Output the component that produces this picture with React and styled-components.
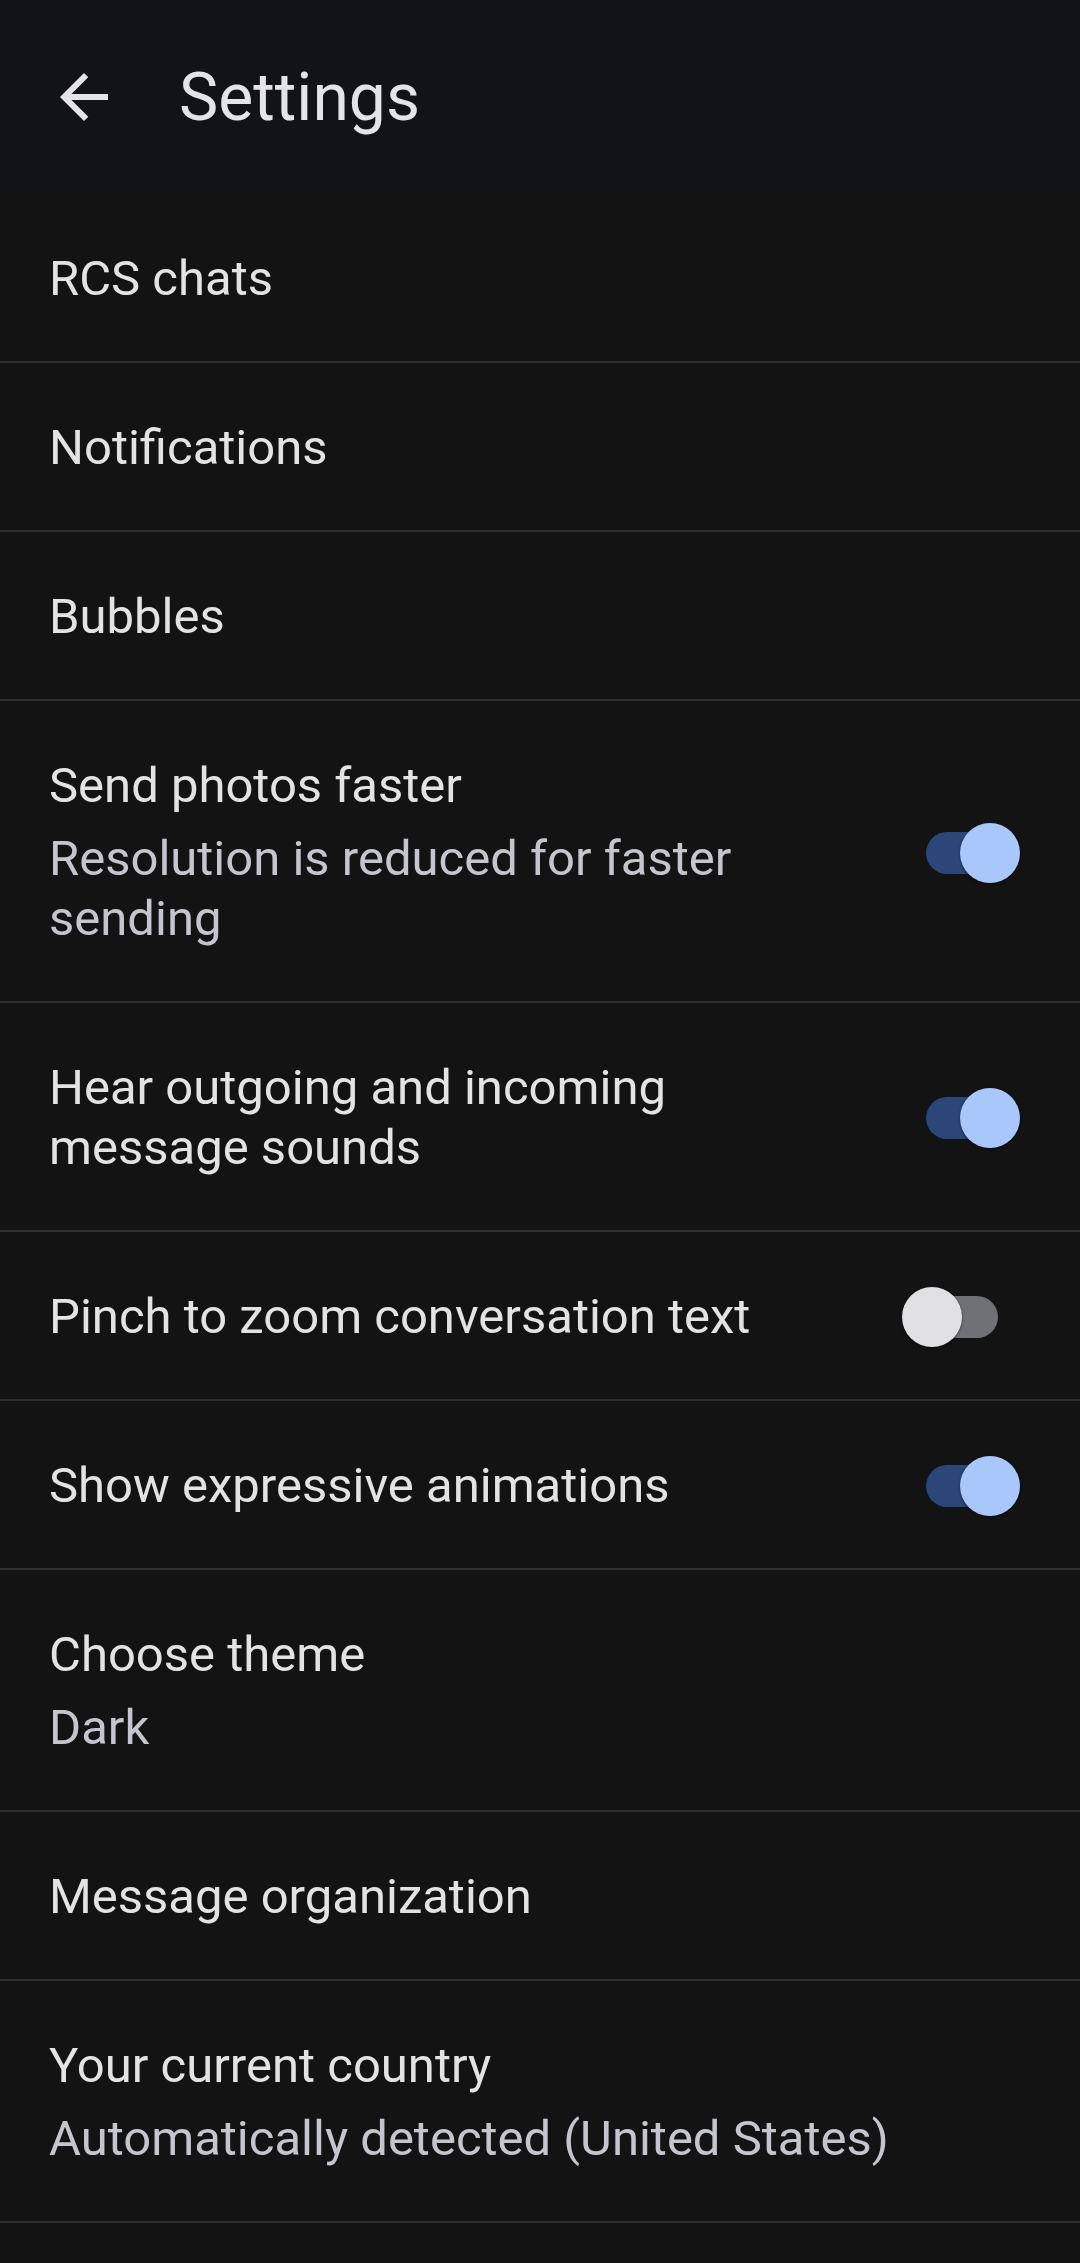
import styled, { createGlobalStyle } from 'styled-components';

const GlobalStyle = createGlobalStyle`
  html, body {
    margin: 0;
    padding: 0;
    background: #131313;
  }
  body {
    font-family: Roboto, "Noto Sans", Arial, sans-serif;
    -webkit-font-smoothing: antialiased;
  }
`;

const Screen = styled.div`
  width: 1080px;
  min-height: 2263px;
  background: #131313;
  color: #e3e3e3;
`;

const Header = styled.header`
  display: flex;
  align-items: center;
  height: 194px;
  padding-left: 48px;
  background: #121316;
`;

const BackButton = styled.button`
  display: flex;
  align-items: center;
  justify-content: center;
  width: 72px;
  height: 72px;
  padding: 0;
  border: none;
  background: none;
  color: #e3e3e8;
`;

const Title = styled.h1`
  margin: 0 0 0 59px;
  font-size: 66px;
  font-weight: 400;
  color: #e3e3e8;
  letter-spacing: 0;
`;

const List = styled.div`
  display: flex;
  flex-direction: column;
`;

const Row = styled.div`
  display: flex;
  align-items: center;
  padding: 55px 60px 52px 49px;
  border-bottom: 2px solid #2f2f30;
`;

const TextBlock = styled.div`
  flex: 1;
  min-width: 0;
`;

const Label = styled.div`
  font-size: 49px;
  line-height: 60px;
  color: #e3e3e3;
`;

const Sub = styled.div`
  margin-top: 13px;
  font-size: 49px;
  line-height: 60px;
  color: #c5c6cd;
`;

const Switch = styled.div`
  position: relative;
  flex-shrink: 0;
  width: 118px;
  height: 60px;
  margin-left: 48px;
`;

const Track = styled.div`
  position: absolute;
  left: 24px;
  top: 9px;
  width: 72px;
  height: 42px;
  border-radius: 21px;
  background: ${(p) => (p.$on ? '#2b4678' : '#6f7177')};
`;

const Thumb = styled.div`
  position: absolute;
  top: 0;
  left: ${(p) => (p.$on ? '58px' : '0')};
  width: 60px;
  height: 60px;
  border-radius: 50%;
  background: ${(p) => (p.$on ? '#a8c7fa' : '#e1e1e4')};
  box-shadow: 0 1px 3px rgba(0, 0, 0, 0.5);
`;

const Toggle = ({ on }) => (
  <Switch>
    <Track $on={on} />
    <Thumb $on={on} />
  </Switch>
);

const settings = [
  { label: 'RCS chats' },
  { label: 'Notifications' },
  { label: 'Bubbles' },
  { label: 'Send photos faster', sub: 'Resolution is reduced for faster sending', toggle: true },
  { label: 'Hear outgoing and incoming message sounds', toggle: true },
  { label: 'Pinch to zoom conversation text', toggle: false },
  { label: 'Show expressive animations', toggle: true },
  { label: 'Choose theme', sub: 'Dark' },
  { label: 'Message organization' },
  { label: 'Your current country', sub: 'Automatically detected (United States)' },
];

export default function App() {
  return (
    <Screen>
      <GlobalStyle />
      <Header>
        <BackButton aria-label="Back">
          <svg width="72" height="72" viewBox="0 -960 960 960" fill="currentColor">
            <path d="M313-440l224 224-57 56-320-320 320-320 57 56-224 224h487v80H313Z" />
          </svg>
        </BackButton>
        <Title>Settings</Title>
      </Header>
      <List>
        {settings.map((s) => (
          <Row key={s.label}>
            <TextBlock>
              <Label>{s.label}</Label>
              {s.sub && <Sub>{s.sub}</Sub>}
            </TextBlock>
            {s.toggle !== undefined && <Toggle on={s.toggle} />}
          </Row>
        ))}
      </List>
    </Screen>
  );
}
